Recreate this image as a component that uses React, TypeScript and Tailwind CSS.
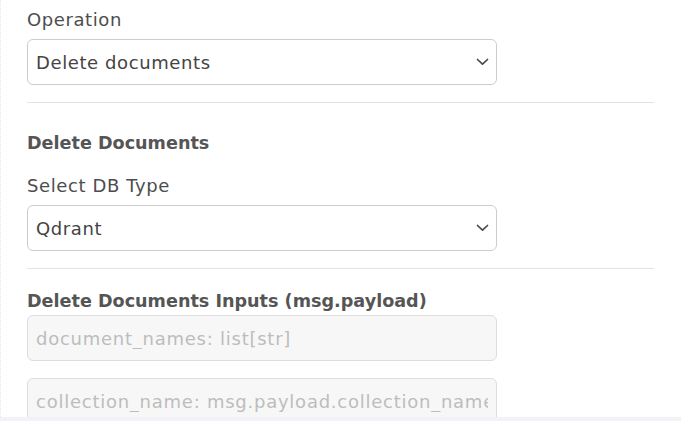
import React from "react";

const Chevron = () => (
  <svg width="13" height="8" viewBox="0 0 13 8" fill="none" className="shrink-0">
    <polyline points="1.5,1.5 6.5,6.2 11.5,1.5" stroke="#4a4a4a" strokeWidth="1.7" strokeLinecap="round" strokeLinejoin="round" />
  </svg>
);

function Select({ value }: { value: string }) {
  return (
    <div className="flex h-[46px] w-[470px] items-center justify-between rounded-[6px] border border-[#cccccc] bg-white pl-[8px] pr-[7px]">
      <span className="mt-[2px] text-[18px] leading-none tracking-[0.6px] text-[#444444]">{value}</span>
      <Chevron />
    </div>
  );
}

function Input({ placeholder }: { placeholder: string }) {
  return (
    <input
      readOnly
      placeholder={placeholder}
      className="block h-[46px] w-[470px] rounded-[6px] border border-[#dddddd] bg-[#f7f7f7] px-[8px] pt-[1px] text-[18px] leading-none tracking-[0.75px] text-[#444444] outline-none placeholder:text-[#bdbdbd]"
      style={{ fontFamily: '"DejaVu Sans", "Noto Sans", sans-serif' }}
    />
  );
}

export default function App() {
  return (
    <div
      className="relative h-[421px] w-[681px] overflow-hidden bg-white"
      style={{ fontFamily: '"DejaVu Sans", "Noto Sans", sans-serif' }}
    >
      <div className="absolute left-0 top-0 h-full w-[3px] border-l border-dotted border-[#e6e6e6]" />
      <div className="flex flex-col pl-[27px] pt-[6px]">
        <div className="h-[27px] text-[18px] leading-[27px] tracking-[0.6px] text-[#4d4d4d]">Operation</div>
        <div className="mt-[6px]">
          <Select value="Delete documents" />
        </div>
        <div className="mt-[17px] h-px w-[627px] bg-[#e3e3e3]" />
        <div className="mt-[27px] h-[27px] text-[17.6px] font-bold leading-[27px] text-[#555555]">Delete Documents</div>
        <div className="mt-[15px] h-[27px] text-[18px] leading-[27px] tracking-[0.6px] text-[#4d4d4d]">Select DB Type</div>
        <div className="mt-[6px]">
          <Select value="Qdrant" />
        </div>
        <div className="mt-[17px] h-px w-[627px] bg-[#e3e3e3]" />
        <div className="mt-[19px] h-[27px] text-[17.6px] font-bold leading-[27px] text-[#555555]">
          Delete Documents Inputs (msg.payload)
        </div>
        <div>
          <Input placeholder="document_names: list[str]" />
        </div>
        <div className="mt-[17px]">
          <Input placeholder="collection_name: msg.payload.collection_name" />
        </div>
      </div>
      <div className="absolute bottom-0 left-0 h-[4px] w-full bg-[#f1f3f6]" />
    </div>
  );
}
